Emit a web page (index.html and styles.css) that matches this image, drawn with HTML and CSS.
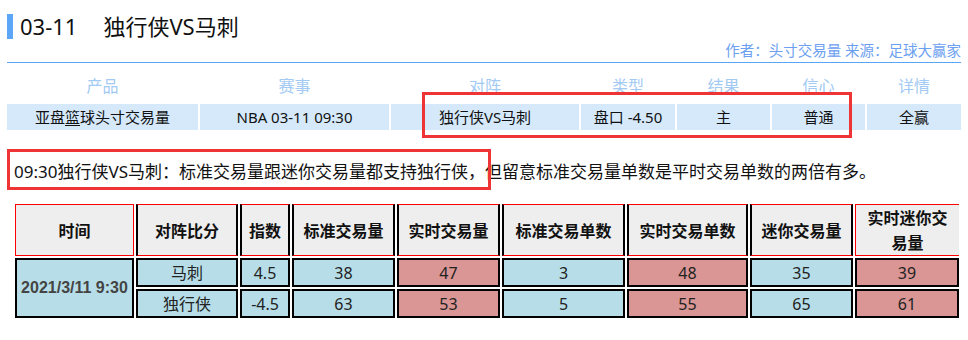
FILE: index.html
```html
<!DOCTYPE html>
<html lang="zh-CN">
<head>
<meta charset="utf-8">
<title>03-11 独行侠VS马刺</title>
<link rel="stylesheet" href="styles.css">
</head>
<body>
<div class="page">
  <h1 class="title"><span class="date">03-11</span><span class="match">独行侠VS马刺</span></h1>
  <div class="author">作者：头寸交易量 来源：足球大赢家</div>

  <div class="info">
    <div class="lab">产品</div>
    <div class="lab">赛事</div>
    <div class="lab">对阵</div>
    <div class="lab">类型</div>
    <div class="lab">结果</div>
    <div class="lab">信心</div>
    <div class="lab">详情</div>
    <div class="val">亚盘<u>篮</u>球头寸交易量</div>
    <div class="val">NBA 03-11 09:30</div>
    <div class="val">独行侠VS马刺</div>
    <div class="val">盘口 -4.50</div>
    <div class="val">主</div>
    <div class="val">普通</div>
    <div class="val">全赢</div>
  </div>

  <p class="note">09:30独行侠VS马刺：标准交易量跟迷你交易量都支持独行侠，但留意标准交易量单数是平时交易单数的两倍有多。</p>

  <table class="data">
    <thead>
      <tr>
        <th class="c1">时间</th>
        <th class="c2">对阵比分</th>
        <th class="c3">指数</th>
        <th class="c4">标准交易量</th>
        <th class="c5">实时交易量</th>
        <th class="c6">标准交易单数</th>
        <th class="c7">实时交易单数</th>
        <th class="c8">迷你交易量</th>
        <th class="c9">实时迷你交易量</th>
      </tr>
    </thead>
    <tbody>
      <tr>
        <td class="time" rowspan="2">2021/3/11 9:30</td>
        <td class="b">马刺</td>
        <td class="b">4.5</td>
        <td class="b">38</td>
        <td class="r">47</td>
        <td class="b">3</td>
        <td class="r">48</td>
        <td class="b">35</td>
        <td class="r">39</td>
      </tr>
      <tr>
        <td class="b">独行侠</td>
        <td class="b">-4.5</td>
        <td class="b">63</td>
        <td class="r">53</td>
        <td class="b">5</td>
        <td class="r">55</td>
        <td class="b">65</td>
        <td class="r">61</td>
      </tr>
    </tbody>
  </table>

  <div class="mark mark-top"></div>
  <div class="mark mark-note"></div>
</div>
</body>
</html>
```

FILE: styles.css
```css
* { box-sizing: border-box; }
html, body { margin: 0; padding: 0; background: #fff; }
body {
  font-family: "Noto Sans", "Noto Sans CJK SC", sans-serif;
  color: #000;
}
.page {
  position: relative;
  width: 968px;
  height: 340px;
  padding-left: 7px;
  overflow: hidden;
}
.title {
  margin: 14px 0 0 0;
  height: 25px;
  border-left: 6px solid #5ba6f7;
  padding-left: 7px;
  font-size: 22px;
  line-height: 25px;
  font-weight: normal;
  display: flex;
  color: #111;
}
.title .date { margin-right: 26px; }
.author {
  width: 954px;
  margin-top: 3px;
  height: 21px;
  line-height: 16px;
  padding-bottom: 4px;
  border-bottom: 1px solid #56a5f8;
  text-align: right;
  font-size: 14.5px;
  color: #6c9ff0;
}
.info {
  width: 954px;
  margin-top: 12px;
  display: grid;
  grid-template-columns: 191px 189px 188px 94px 93px 93px 94px;
  grid-template-rows: 22px 26px;
  column-gap: 2px;
  row-gap: 7px;
}
.lab {
  text-align: center;
  font-size: 16px;
  line-height: 22px;
  color: #a2caf3;
}
.val {
  background: #d5e9fb;
  text-align: center;
  font-size: 15px;
  line-height: 26px;
  color: #111;
}
.val u { text-decoration: underline; text-underline-offset: 2px; }
.note {
  margin: 31px 0 0 7px;
  font-size: 17px;
  line-height: 22px;
  color: #111;
}
.data {
  margin: 19px 0 0 6px;
  border-collapse: separate;
  border-spacing: 2px;
  table-layout: fixed;
  width: 948px;
}
.data th, .data td {
  padding: 0 4px;
  text-align: center;
  vertical-align: middle;
}
.data th {
  height: 52px;
  background: #eeeeee;
  font-family: "Noto Sans CJK SC", sans-serif;
  font-weight: bold;
  font-size: 16px;
  line-height: 25px;
  color: #111;
  border-top: 1px solid #ff0000;
  border-bottom: 1px solid #ff0000;
  border-left: 2px solid #000;
  border-right: 2px solid #000;
}
.data th.c1 { border-left: 1px solid #ff0000; border-right: 1px solid #ff0000; }
.data th.c9 { border-left: 1px solid #ff0000; border-right: 0; }
.c1 { width: 119px; }
.c2 { width: 102px; }
.c3 { width: 50px; }
.c4 { width: 103px; }
.c5 { width: 103px; }
.c6 { width: 123px; }
.c7 { width: 121px; }
.c8 { width: 103px; }
.c9 { width: 104px; }
.data td {
  height: 29px;
  border: 2px solid #000;
  font-size: 16px;
  line-height: 24px;
  color: #222;
}
.data td.b { background: #b7dee8; }
.data td.r { background: #da9694; }
.data td.time {
  background: #b7dee8;
  font-family: "Liberation Sans", Arial, sans-serif;
  font-weight: bold;
  color: #444;
  padding: 0;
}
.mark {
  position: absolute;
  border: 3px solid #ee3434;
}
.mark-top { left: 422px; top: 92px; width: 430px; height: 46px; }
.mark-note { left: 7px; top: 149px; width: 484px; height: 41px; }
```
